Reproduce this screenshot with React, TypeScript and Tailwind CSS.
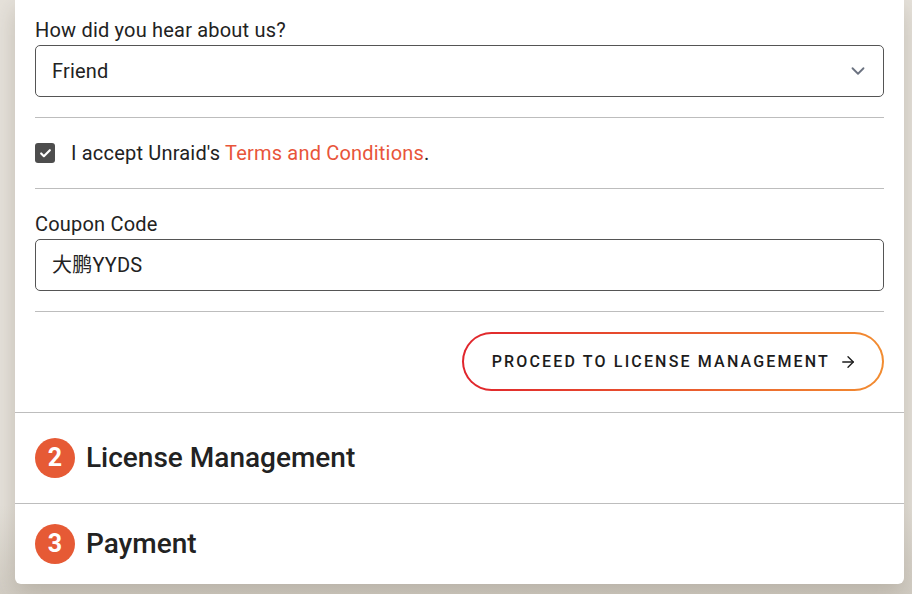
import { ChevronDown, Check, ArrowRight } from "lucide-react"

const font = { fontFamily: "Roboto, 'Noto Sans CJK SC', sans-serif" }

function Divider() {
  return <div className="h-px bg-[#bdbdbd]" />
}

function Step({ n, title, className }: { n: number; title: string; className?: string }) {
  return (
    <div className={`flex items-center gap-[11px] px-5 ${className ?? ""}`}>
      <div className="flex h-10 w-10 items-center justify-center rounded-full bg-[#e65a35] text-[25px] font-bold text-white">
        {n}
      </div>
      <h2 className="text-[28px] font-medium leading-[40px] text-[#222]">{title}</h2>
    </div>
  )
}

export default function App() {
  return (
    <div
      className="h-[594px] w-[912px] overflow-hidden bg-[linear-gradient(to_bottom,#e6e2db_85%,#d2cdc4)] px-[15px] pr-[8px]"
      style={font}
    >
      <div className="rounded-b-md bg-white shadow-[0_8px_24px_rgba(90,80,60,0.25)]">
        {/* Form */}
        <div className="px-5 pt-4 tracking-[0.012em]">
          <label className="block text-[20px] leading-[28px] text-[#222] mb-px">How did you hear about us?</label>
          <div className="flex h-[52px] items-center justify-between rounded-[5px] border border-[#555] pl-4 pr-[14px]">
            <span className="text-[20px] text-[#222]">Friend</span>
            <ChevronDown className="h-[22px] w-[22px] text-[#6b7280]" strokeWidth={2} />
          </div>
          <div className="mt-5">
            <Divider />
          </div>

          <div className="flex items-center gap-4 py-[21px]">
            <div className="flex h-5 w-5 items-center justify-center rounded-[3px] bg-[#4d4d4d]">
              <Check className="h-[13px] w-[13px] text-white" strokeWidth={4} />
            </div>
            <span className="text-[20px] leading-[28px] text-[#222]">
              I accept Unraid's <a className="text-[#e8553a]">Terms and Conditions</a>.
            </span>
          </div>
          <Divider />

          <label className="mt-[21px] mb-px block text-[20px] leading-[28px] text-[#222]">Coupon Code</label>
          <div className="flex h-[52px] items-center rounded-[5px] border border-[#555] pl-4">
            <span className="text-[20px] text-[#222]">大鹏YYDS</span>
          </div>
          <div className="mt-5">
            <Divider />
          </div>

          <div className="flex justify-end pt-5 pb-[21px]">
            <div className="rounded-full bg-[linear-gradient(to_right,#e0242c,#f28c30)] p-[2px]">
              <button className="flex h-[55px] items-center gap-[9px] rounded-full bg-white pl-[28px] pr-[25px] text-[16px] font-medium tracking-[0.135em] text-[#1c1c1c]">
                PROCEED TO LICENSE MANAGEMENT
                <ArrowRight className="h-[18px] w-[18px]" strokeWidth={1.8} />
              </button>
            </div>
          </div>
        </div>

        <Divider />
        <Step n={2} title="License Management" className="pt-[25px] pb-[25px]" />
        <Divider />
        <Step n={3} title="Payment" className="py-5" />
      </div>
    </div>
  )
}
